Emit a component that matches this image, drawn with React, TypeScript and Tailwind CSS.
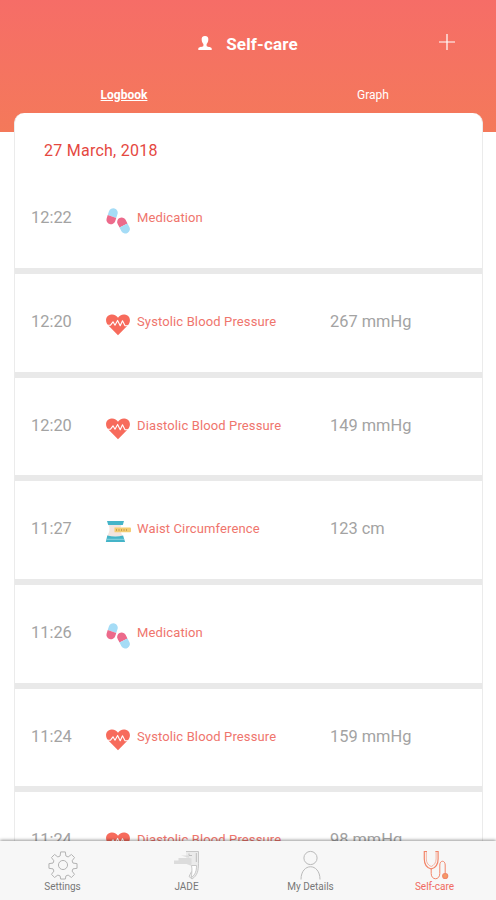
import type { ReactNode } from 'react';

type EntryKind = 'medication' | 'pressure' | 'waist';

const entries: { time: string; kind: EntryKind; label: string; value?: string }[] = [
  { time: '12:22', kind: 'medication', label: 'Medication' },
  { time: '12:20', kind: 'pressure', label: 'Systolic Blood Pressure', value: '267 mmHg' },
  { time: '12:20', kind: 'pressure', label: 'Diastolic Blood Pressure', value: '149 mmHg' },
  { time: '11:27', kind: 'waist', label: 'Waist Circumference', value: '123 cm' },
  { time: '11:26', kind: 'medication', label: 'Medication' },
  { time: '11:24', kind: 'pressure', label: 'Systolic Blood Pressure', value: '159 mmHg' },
  { time: '11:24', kind: 'pressure', label: 'Diastolic Blood Pressure', value: '98 mmHg' },
];

function PillsIcon() {
  return (
    <svg width="26" height="26" viewBox="0 0 26 26">
      <g transform="rotate(18 7 8.5)">
        <path d="M2.500 8.500V4.500a4.500 4.500 0 0 1 9 0v4z" fill="#a5dcf6" />
        <path d="M2.500 8.500V12a4.500 4.500 0 0 0 9 0V8.500z" fill="#ec6a8b" />
      </g>
      <g transform="rotate(-28 18.5 17.5)">
        <path d="M14 17.500V13.500a4.500 4.500 0 0 1 9 0v4z" fill="#ec6a8b" />
        <path d="M14 17.500V21.500a4.500 4.500 0 0 0 9 0v-4z" fill="#a5dcf6" />
      </g>
    </svg>
  );
}

function HeartIcon() {
  return (
    <svg width="26" height="26" viewBox="0 0 26 26">
      <path
        d="M13 23.200 2.900 13C-.2 9.600.4 3.300 6.500 2.600c3-.2 5.200 1.200 6.500 3.200 1.300-2 3.500-3.400 6.500-3.200 6.100.7 6.700 7 3.600 10.400z"
        fill="#f76b5c"
      />
      <path
        d="M0 13.200h5.500l2.500-3.400 2 3.400 2.600-4.800 2.600 5.400 2.300-5 2.500 5H26"
        fill="none"
        stroke="#fff"
        strokeWidth="1.100"
        strokeLinejoin="round"
      />
    </svg>
  );
}

function WaistIcon() {
  return (
    <svg width="26" height="26" viewBox="0 0 26 26">
      <path d="M3.500 5.500h13c-1.500 4-1.500 7 1.500 12H2c3-5 3-8 1.500-12z" fill="#f3e4de" />
      <path d="M2 2h17l-1.200 4H3.200z" fill="#45b4c8" />
      <path d="M2.300 16.500q8 1.800 15.800 0l2 6.500H.8z" fill="#45b4c8" />
      <path d="M2 20.300h17" stroke="#8ed5df" strokeWidth="1" />
      <path d="M9.500 8.500H25q1 0 1 1v2.800q0 1-1 1H9.500z" fill="#f4cd72" />
      <path d="M11.500 12v-2m2.500 2v-2m2.500 2v-2m2.500 2v-2m2.500 2v-2" stroke="#c29b50" strokeWidth=".9" />
    </svg>
  );
}

const entryIcons: Record<EntryKind, ReactNode> = {
  medication: <PillsIcon />,
  pressure: <HeartIcon />,
  waist: <WaistIcon />,
};

function SettingsIcon() {
  return (
    <svg width="30" height="30" viewBox="-.5 -.5 31 31" fill="none" stroke="#b0b0b0" strokeWidth="1" strokeLinejoin="round">
      <path d="M12.600 1.500h4.800l.6 4.200 2.300 1 3.400-2.600 3.200 3.200-2.500 3.400.9 2.300 4.200.6v4.800l-4.200.6-.9 2.300 2.500 3.400-3.200 3.200-3.400-2.500-2.300.9-.6 3.200h-4.800l-.6-3.200-2.300-.9-3.400 2.500-3.200-3.200 2.500-3.400-.9-2.300-4.200-.6v-4.800l4.200-.6.900-2.300-2.500-3.400 3.200-3.200 3.400 2.600 2.300-1z" />
      <circle cx="15" cy="15" r="4.700" />
    </svg>
  );
}

function JadeIcon() {
  return (
    <svg width="30" height="30" viewBox="-2 0 30 30" fill="none" stroke="#bdbdbd" strokeWidth="1">
      <path d="M12 1.500h12.500v12c0 7-1 12-6.500 15.500l-3-2.500 4-7-1.500-5.500L12 13z" fill="#ebebeb" stroke="none" />
      <path d="M12 1.500h12.500v12c0 7-1 12-6.500 15.500l-3-2.500 2.500-5" strokeWidth=".8" />
      <path d="M15 3.500v2h3M22.300 3v9" />
      <path d="M7 5.500h8v2.500H4.500v2.500H0V14h12.500l5 2V8.500z" fill="#dcdcdc" stroke="none" />
      <path d="M17.500 15.500h5c0 5-1 9-5 12 0-4 1-7 0-12z" fill="#fff" strokeWidth=".8" />
    </svg>
  );
}

function PersonIcon() {
  return (
    <svg width="30" height="30" viewBox="0 0 30 30" fill="none" stroke="#bababa" strokeWidth="1">
      <circle cx="14.500" cy="8" r="6.600" />
      <path d="M5 29.500c0-17 19-17 19 0" />
    </svg>
  );
}

function StethoscopeIcon() {
  return (
    <svg width="30" height="30" viewBox="0 0 30 30" fill="none" stroke="#f28569" strokeWidth="1.200">
      <path d="M7 1.500H4.300V9c0 6 3 9 6.900 10 3.900-1 6.900-4 6.900-10V1.500h-2.700" />
      <path d="M6.300 1.500V9c0 4 2.300 6.500 4.900 7.500 2.600-1 4.900-3.500 4.900-7.500V1.500" strokeWidth=".6" />
      <path d="M11.200 18v5.500c0 7 8.600 7 8.600 0V15c0-5 5.400-5 5.400 0v9" strokeWidth="1" />
      <circle cx="25.200" cy="26" r="2.500" fill="#f39b66" />
    </svg>
  );
}

const tabs = [
  { label: 'Settings', icon: <SettingsIcon /> },
  { label: 'JADE', icon: <JadeIcon /> },
  { label: 'My Details', icon: <PersonIcon /> },
  { label: 'Self-care', icon: <StethoscopeIcon />, active: true },
];

export default function App() {
  return (
    <div className="flex h-[900px] w-[496px] flex-col overflow-hidden bg-white font-[Roboto,sans-serif]">
      <header className="h-[132px] shrink-0 bg-gradient-to-b from-[#f66d67] to-[#f4795a] text-white">
        <div className="grid h-[86px] grid-cols-[1fr_auto_1fr] items-center">
          <div />
          <div className="flex items-center gap-[13px]">
            <svg width="14" height="14" viewBox="0 0 14 14" fill="currentColor">
              <path d="M7 0C4.500 0 3.400 1.500 3.700 4c.1 1.700.8 3 1.700 4v1.800C5.400 11 .8 10.700.3 12.500V14h13.400v-1.500C13.200 10.700 8.600 11 8.600 9.800V8c.9-1 1.600-2.300 1.700-4C10.600 1.500 9.500 0 7 0z" />
            </svg>
            <h1 className="pl-px pt-[3px] text-[17px] font-bold tracking-[0.150px]">Self-care</h1>
          </div>
          <svg width="16" height="16" viewBox="0 0 16 16" stroke="currentColor" strokeWidth="1.200" className="mr-[41px] mb-[2px] justify-self-end">
            <path d="M8 0v16M0 8h16" />
          </svg>
        </div>
        <div className="grid grid-cols-2 text-center text-[12px] leading-[18px]">
          <span className="font-bold underline underline-offset-1">Logbook</span>
          <span className="pl-[2px]">Graph</span>
        </div>
      </header>

      <main className="z-10 -mt-[19px] ml-[14px] mr-[13px] flex-1 overflow-hidden rounded-t-[10px] border-x border-[#ebebeb] bg-white">
        <h2 className="h-[57.300px] pl-[29px] pt-[26px] text-[16px] leading-6 tracking-[0.250px] text-[#e5483f]">27 March, 2018</h2>
        {entries.map((entry, i) => (
          <div
            key={i}
            className="grid h-[103.700px] grid-cols-[73px_33px_193px_1fr] items-start border-b-[6px] border-[#e9e9e9] pl-4 pt-9"
          >
            <span className="text-[16.400px] leading-6 text-[#a3a3a3]">{entry.time}</span>
            <span className="pl-px pt-[2px]">{entryIcons[entry.kind]}</span>
            <span className="text-[13px] leading-6 tracking-[0.130px] text-[#ef756d]">{entry.label}</span>
            <span className="text-[16.400px] leading-6 text-[#a3a3a3]">{entry.value}</span>
          </div>
        ))}
      </main>

      <nav className="z-20 grid h-[59px] shrink-0 grid-cols-4 bg-[#f7f7f7] shadow-[0_-1px_3px_rgba(0,0,0,0.400)]">
        {tabs.map((tab) => (
          <div key={tab.label} className="flex flex-col items-center pl-px pt-[9px]">
            {tab.icon}
            <span className={`text-[10px] leading-[13px] ${tab.active ? 'text-[#f06a60]' : 'text-[#777]'}`}>{tab.label}</span>
          </div>
        ))}
      </nav>
    </div>
  );
}
